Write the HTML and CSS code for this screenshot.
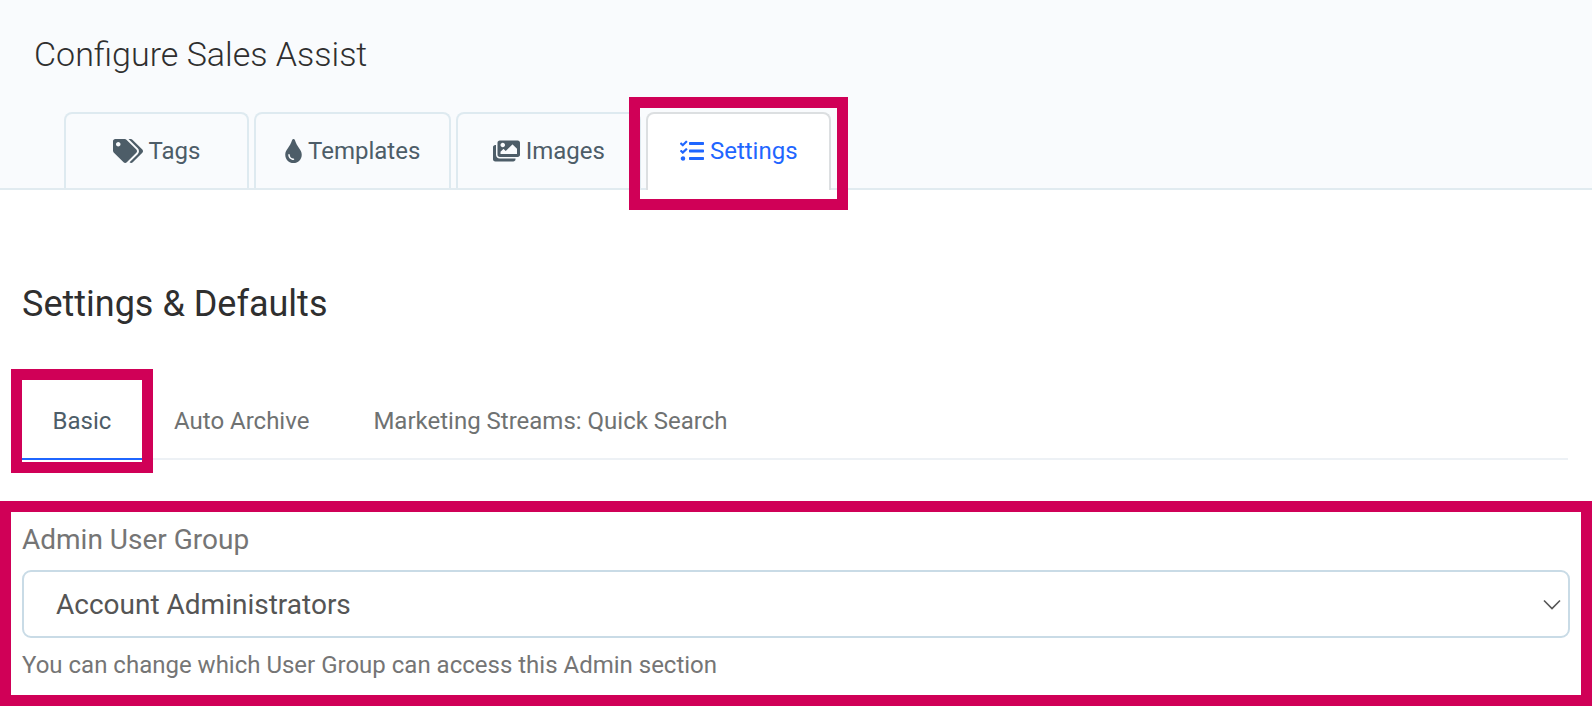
FILE: index.html
```html
<!DOCTYPE html>
<html lang="en">
<head>
<meta charset="utf-8">
<title>Configure Sales Assist</title>
<link rel="stylesheet" href="styles.css">
</head>
<body>
<header class="top">
  <h1 class="title">Configure Sales Assist</h1>
  <nav class="tabs">
    <a class="tab"><svg class="ico ico-tags" viewBox="0 0 640 512"><path d="M497.941 225.941L286.059 14.059A48 48 0 0 0 252.118 0H48C21.49 0 0 21.49 0 48v204.118a48 48 0 0 0 14.059 33.941l211.882 211.882c18.744 18.745 49.136 18.746 67.882 0l204.118-204.118c18.745-18.745 18.745-49.137 0-67.882zM112 160c-26.51 0-48-21.49-48-48s21.49-48 48-48 48 21.49 48 48-21.49 48-48 48zm513.941 133.823L421.823 497.941c-18.745 18.745-49.137 18.745-67.882 0l-.36-.36L527.64 323.522c16.999-16.999 26.36-39.6 26.36-63.64s-9.362-46.641-26.36-63.64L331.397 0h48.721a48 48 0 0 1 33.941 14.059l211.882 211.882c18.745 18.745 18.745 49.137 0 67.882z"/></svg>Tags</a>
    <a class="tab"><svg class="ico ico-tint" viewBox="0 0 352 512"><path d="M205.22 22.09c-7.94-28.78-49.44-30.12-58.44 0C100.01 179.85 0 222.72 0 333.91 0 432.35 78.72 512 176 512s176-79.65 176-178.09c0-111.75-99.79-153.34-146.78-311.82zM176 448c-61.75 0-112-50.25-112-112 0-8.84 7.16-16 16-16s16 7.16 16 16c0 44.11 35.89 80 80 80 8.84 0 16 7.16 16 16s-7.16 16-16 16z"/></svg>Templates</a>
    <a class="tab"><svg class="ico ico-images" viewBox="0 0 576 512"><path fill-rule="evenodd" d="M480 416v16c0 26.51-21.49 48-48 48H48c-26.51 0-48-21.49-48-48V176c0-26.51 21.49-48 48-48h16v208c0 44.112 35.888 80 80 80h336zm96-80V80c0-26.51-21.49-48-48-48H144c-26.51 0-48 21.49-48 48v256c0 26.51 21.49 48 48 48h384c26.51 0 48-21.49 48-48zM256 128c0 26.51-21.49 48-48 48s-48-21.49-48-48 21.49-48 48-48 48 21.49 48 48zm-96 144l55.515-55.515c4.686-4.686 12.284-4.686 16.971 0L272 256l135.515-135.515c4.686-4.686 12.284-4.686 16.971 0L512 208v112H160v-48z"/></svg>Images</a>
    <a class="tab tab-active"><svg class="ico ico-tasks" viewBox="0 0 512 512"><path d="M139.61 35.5a12 12 0 0 0-17 0L58.93 98.81l-22.7-22.12a12 12 0 0 0-17 0L3.53 92.41a12 12 0 0 0 0 17l47.59 47.4a12.78 12.78 0 0 0 17.61 0l15.59-15.62L156.52 69a12.09 12.09 0 0 0 .09-17zm0 159.19a12 12 0 0 0-17 0l-63.68 63.72-22.7-22.1a12 12 0 0 0-17 0L3.53 252a12 12 0 0 0 0 17L51 316.5a12.77 12.77 0 0 0 17.6 0l15.7-15.69 72.2-72.22a12 12 0 0 0 .09-16.9zM64 368c-26.49 0-48.59 21.5-48.59 48S37.53 464 64 464a48 48 0 0 0 0-96zm432 16H208a16 16 0 0 0-16 16v32a16 16 0 0 0 16 16h288a16 16 0 0 0 16-16v-32a16 16 0 0 0-16-16zm0-320H208a16 16 0 0 0-16 16v32a16 16 0 0 0 16 16h288a16 16 0 0 0 16-16V80a16 16 0 0 0-16-16zm0 160H208a16 16 0 0 0-16 16v32a16 16 0 0 0 16 16h288a16 16 0 0 0 16-16v-32a16 16 0 0 0-16-16z"/></svg>Settings<span class="mark mark-settings"></span></a>
  </nav>
</header>
<main class="content">
  <h2 class="heading">Settings &amp; Defaults</h2>
  <nav class="subtabs">
    <a class="subtab subtab-active">Basic<span class="mark mark-basic"></span></a>
    <a class="subtab">Auto Archive</a>
    <a class="subtab">Marketing Streams: Quick Search</a>
  </nav>
  <section class="field-box">
    <label class="field-label">Admin User Group</label>
    <div class="select">
      <span>Account Administrators</span>
      <svg class="chevron" viewBox="0 0 18 11"><path d="M1 1.5l8 8 8-8"/></svg>
    </div>
    <p class="help">You can change which User Group can access this Admin section</p>
  </section>
</main>
</body>
</html>
```
FILE: styles.css
```css
* { box-sizing: border-box; }
html, body { margin: 0; padding: 0; }
body {
  width: 1592px;
  height: 706px;
  overflow: hidden;
  background: #fff;
  font-family: Roboto, "Liberation Sans", sans-serif;
}
.top {
  height: 190px;
  padding-top: 34px;
  background: #f9fbfd;
  border-bottom: 2px solid #e1ebf0;
}
.title {
  margin: 0 0 0 34px;
  font-size: 34px;
  line-height: 40px;
  font-weight: 300;
  color: #2f2f2f;
}
.tabs {
  display: flex;
  gap: 5px;
  margin: 38px 0 0 64px;
}
.tab {
  position: relative;
  display: flex;
  align-items: center;
  justify-content: center;
  gap: 6px;
  min-width: 185px;
  height: 76px;
  padding: 0 29px;
  border: 2px solid #deeaf0;
  border-bottom: 0;
  border-radius: 8px 8px 0 0;
  font-size: 24px;
  color: #4d5d68;
}
.tab-active {
  height: 78px;
  padding-bottom: 2px;
  border-color: #dcdfe1;
  background: #fff;
  color: #1f66ff;
}
.ico { fill: currentColor; flex: none; }
.ico-tags { width: 30px; height: 24px; }
.ico-tint { width: 17px; height: 24px; }
.ico-images { width: 27px; height: 24px; }
.ico-tasks { width: 24px; height: 24px; }
.mark {
  position: absolute;
  border: 11px solid #d00057;
  pointer-events: none;
}
.mark-settings { left: -19px; right: -19px; top: -17px; bottom: -20px; }
.mark-basic { left: -11px; right: -11px; top: -11px; bottom: -15px; }
.content { padding: 0 24px 0 0; }
.heading {
  margin: 92px 0 0 22px;
  font-size: 36px;
  line-height: 44px;
  font-weight: 400;
  color: #2f2f2f;
}
.subtabs {
  display: flex;
  height: 80px;
  margin: 54px 0 0 22px;
  border-bottom: 2px solid #edf1f5;
}
.subtab {
  position: relative;
  display: flex;
  align-items: center;
  padding: 4px 32px 0;
  font-size: 24px;
  color: #6f7272;
}
.subtab-active {
  width: 120px;
  justify-content: center;
  padding: 4px 0 0;
  color: #4d5d68;
  border-bottom: 2px solid #1f66ff;
  margin-bottom: -2px;
}
.field-box {
  width: 1592px;
  height: 205px;
  margin-top: 41px;
  padding: 10px 11px 0;
  border: 11px solid #d00057;
}
.field-label {
  display: block;
  font-size: 28px;
  line-height: 36px;
  color: #757575;
}
.select {
  display: flex;
  align-items: center;
  justify-content: space-between;
  height: 68px;
  margin-top: 12px;
  padding: 0 7px 0 32px;
  border: 2px solid #c9dbe6;
  border-radius: 9px;
  font-size: 28px;
  color: #555;
}
.chevron {
  width: 18px;
  height: 11px;
  fill: none;
  stroke: #555;
  stroke-width: 1.6;
}
.help {
  margin: 12px 0 0;
  font-size: 24px;
  line-height: 30px;
  color: #757575;
}
```
